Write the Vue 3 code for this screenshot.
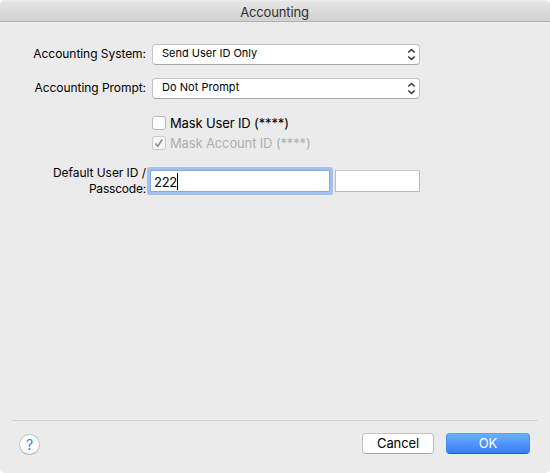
<script setup>
import { ref } from 'vue'

const selects = [
  { label: 'Accounting System:', value: 'Send User ID Only', kind: 'system' },
  { label: 'Accounting Prompt:', value: 'Do Not Prompt', kind: 'prompt' },
]
const checks = [
  { label: 'Mask User ID (****)', on: false, disabled: false },
  { label: 'Mask Account ID (****)', on: true, disabled: true },
]
const userId = ref('222')
</script>

<template>
  <div class="window">
    <header class="titlebar"><span class="title">Accounting</span></header>
    <main class="form">
      <div v-for="s in selects" :key="s.kind" class="row">
        <span class="label">{{ s.label }}</span>
        <div class="select">
          <span class="value" :class="s.kind">{{ s.value }}</span>
          <svg class="arrows" width="9" height="13" viewBox="0 0 9 13">
            <path d="M1.2 4.5 L4.5 1.6 L7.8 4.5 M1.2 8.5 L4.5 11.4 L7.8 8.5" />
          </svg>
        </div>
      </div>
      <div class="checks">
        <div v-for="c in checks" :key="c.label" class="check" :class="{ disabled: c.disabled }">
          <span class="box">
            <svg v-if="c.on" width="12" height="12" viewBox="0 0 12 12">
              <path d="M2.4 6.4 L4.8 9.2 L9.3 2.5" />
            </svg>
          </span>
          <span class="check-label">{{ c.label }}</span>
        </div>
      </div>
      <div class="fields">
        <div class="field-label"><span class="l1">Default User ID /</span><span class="l2">Passcode:</span></div>
        <div class="input focused"><span class="digits">{{ userId }}</span><span class="caret"></span></div>
        <div class="input second"></div>
      </div>
    </main>
    <footer class="footer">
      <div class="help">?</div>
      <div class="spacer"></div>
      <div class="button cancel"><span>Cancel</span></div>
      <div class="button ok"><span>OK</span></div>
    </footer>
  </div>
</template>

<style>
body {
  background: #fff;
}
</style>

<style scoped>
* {
  box-sizing: border-box;
}
.window {
  width: 550px;
  height: 473px;
  display: flex;
  flex-direction: column;
  overflow: hidden;
  border-radius: 5px;
  background: #ebebeb;
  color: #000;
  font-family: Inter, "Liberation Sans", sans-serif;
  font-size: 12px;
  white-space: nowrap;
}
.titlebar {
  height: 22px;
  flex: none;
  display: flex;
  justify-content: center;
  border-bottom: 1px solid #b1b1b1;
  background: linear-gradient(#f4f4f4 0, #e6e6e6 1px, #d1d1d1 21px);
}
.title {
  color: #2e2e2e;
  font-size: 13px;
  letter-spacing: -0.15px;
  line-height: 24px;
  margin-right: 1px;
}
.form {
  flex: 1;
  padding-top: 22px;
}
.row {
  display: flex;
  height: 21px;
  margin-bottom: 13px;
}
.label {
  width: 146px;
  margin-right: 6px;
  text-align: right;
  letter-spacing: -0.05px;
  line-height: 20px;
}
.select {
  width: 268px;
  display: flex;
  align-items: center;
  justify-content: space-between;
  padding: 0 3px 0 9px;
  border: 1px solid #c2c2c2;
  border-bottom-color: #a9a9a9;
  border-radius: 4px;
  background: #fff;
}
.value {
  font-size: 11px;
  line-height: 17px;
  margin-bottom: 2px;
}
.value.prompt {
  letter-spacing: 0.04px;
}
.arrows path {
  fill: none;
  stroke: #3d3d3d;
  stroke-width: 1.5;
}
.checks {
  padding: 4px 0 0 152px;
}
.check {
  display: flex;
  height: 14px;
  margin-bottom: 6px;
}
.box {
  width: 14px;
  height: 14px;
  border: 1px solid #b8b8b8;
  border-radius: 3px;
  background: #fff;
}
.box svg {
  display: block;
}
.box path {
  fill: none;
  stroke: #8e8e8e;
  stroke-width: 1.6;
}
.check-label {
  margin-left: 4px;
  font-size: 13px;
  letter-spacing: -0.14px;
  line-height: 15px;
}
.disabled {
  color: #b0b0b0;
}
.disabled .box {
  border-color: #cacaca;
  background: #f5f5f5;
}
.fields {
  display: flex;
  padding-top: 14px;
}
.field-label {
  width: 146px;
  height: 32px;
  margin: -5px 4px 0 0;
  display: flex;
  flex-direction: column;
  align-items: flex-end;
  letter-spacing: -0.05px;
  line-height: 16px;
}
.l2 {
  letter-spacing: -0.2px;
}
.input {
  width: 85px;
  height: 22px;
  border: 1px solid #b9b9b9;
  border-top-color: #cacaca;
  background: #fff;
}
.input.focused {
  width: 180px;
  margin-right: 5px;
  padding-left: 3px;
  display: flex;
  align-items: center;
  border-color: #86a8df;
  border-radius: 1px;
  box-shadow: 0 0 0 3px #a3c0ef;
}
.digits {
  font-size: 13px;
  letter-spacing: -0.3px;
  line-height: 22px;
  padding-top: 2px;
}
.caret {
  width: 1px;
  height: 17px;
  background: #000;
}
.footer {
  height: 53px;
  flex: none;
  margin: 0 12px;
  padding: 12px 8px 0 7px;
  display: flex;
  border-top: 1px solid #d2d2d2;
}
.help {
  width: 21px;
  height: 21px;
  margin-top: 1px;
  border: 1px solid #c4c4c4;
  border-bottom-color: #a9a9a9;
  border-radius: 50%;
  background: #fff;
  color: #2f7cf6;
  font-size: 14px;
  line-height: 20px;
  text-align: center;
}
.spacer {
  flex: 1;
}
.button {
  height: 21px;
  border: 1px solid #c2c2c2;
  border-bottom-color: #a9a9a9;
  border-radius: 4px;
  background: #fff;
  font-size: 13px;
  letter-spacing: -0.1px;
  line-height: 19px;
  text-align: center;
}
.cancel {
  width: 72px;
  margin-right: 12px;
}
.ok {
  width: 84px;
  border-color: #5a9df5 #4689f7 #2a55f2;
  background: linear-gradient(#6bb0fa, #3a7bfb);
  color: #fff;
}
</style>
